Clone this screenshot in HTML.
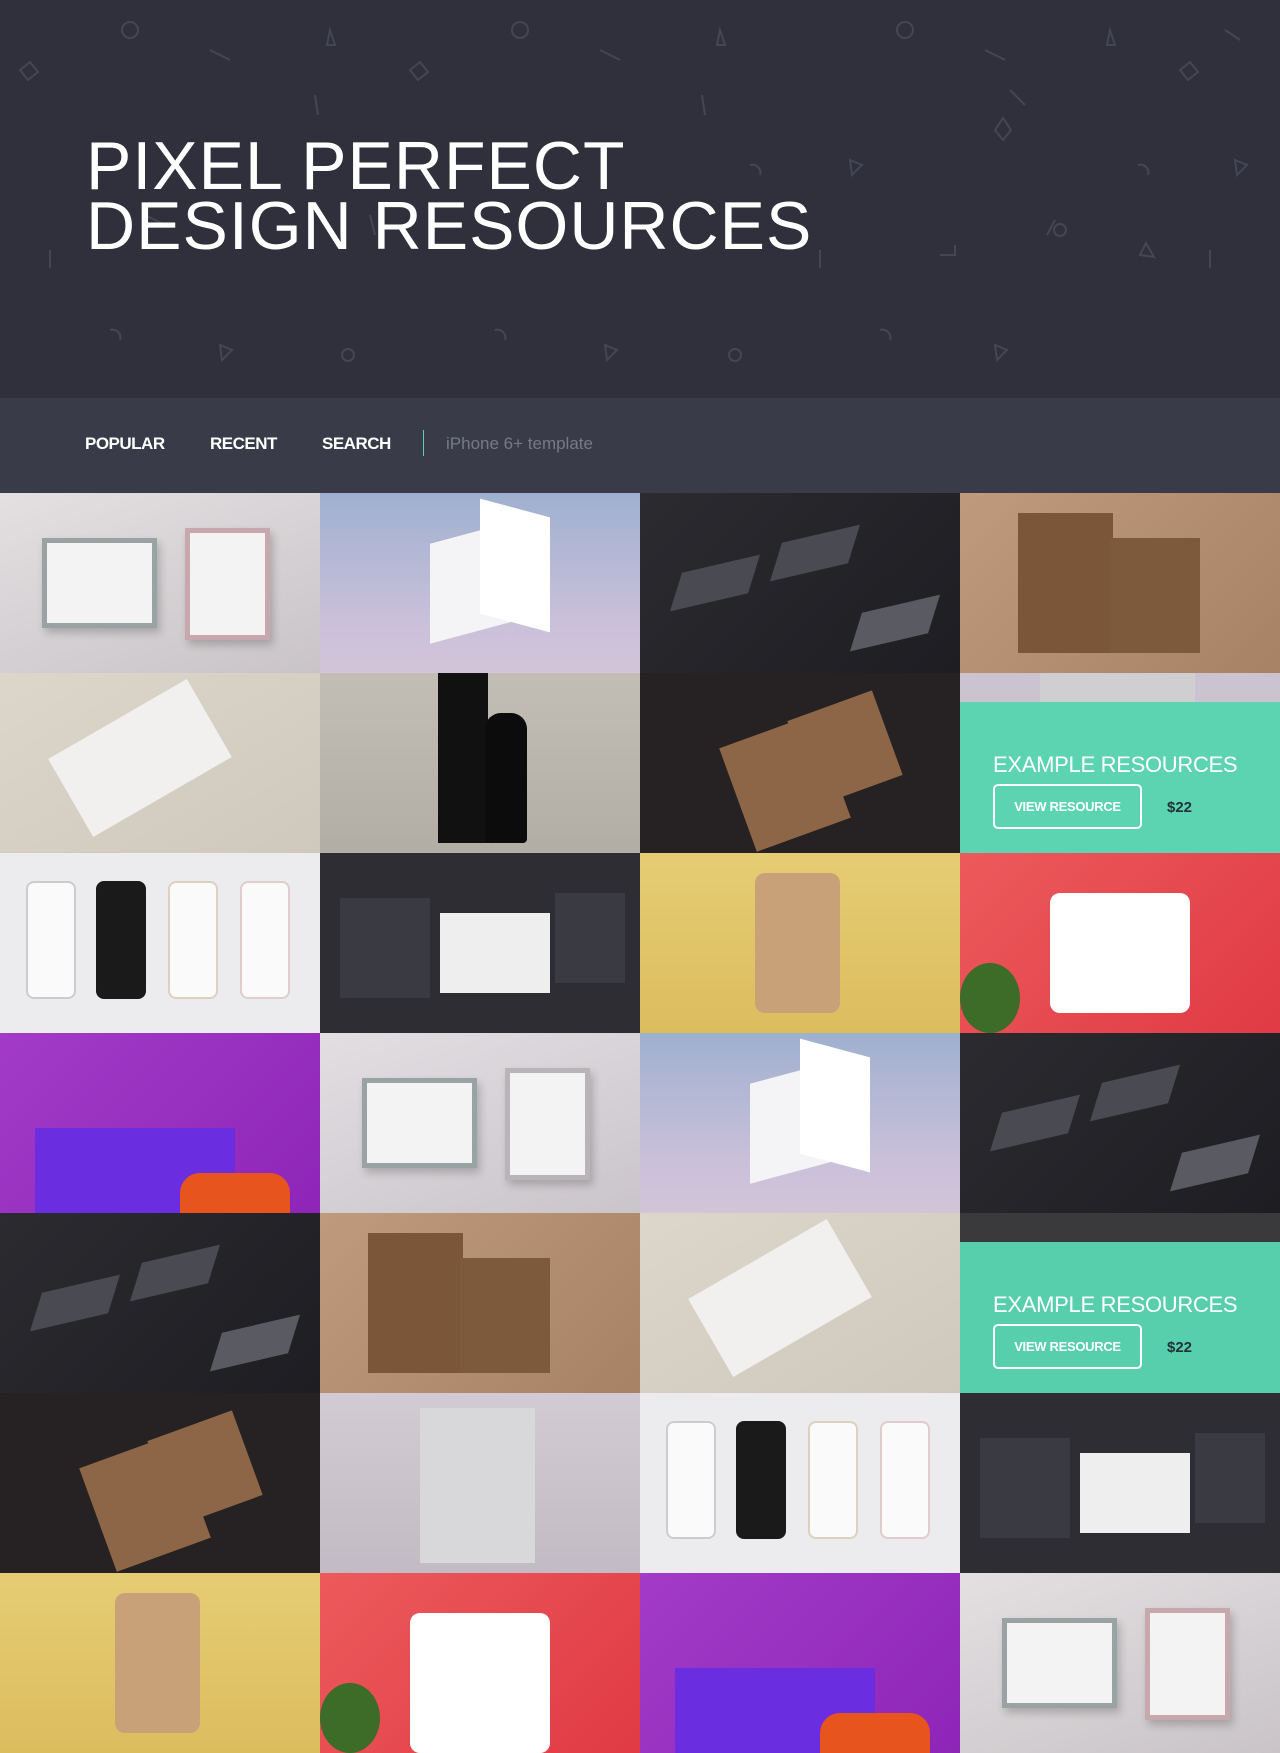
<!DOCTYPE html>
<html><head><meta charset="utf-8"><style>
*{margin:0;padding:0;box-sizing:border-box}
body{width:1280px;height:1753px;overflow:hidden;background:#30303c;font-family:"Liberation Sans",sans-serif}
.hdr{position:absolute;left:0;top:0;width:1280px;height:398px;background:#30303c;overflow:hidden}
.hdr h1{position:absolute;left:86px;top:136px;color:#fff;font-weight:400;font-size:68px;line-height:60px;letter-spacing:1px}
.nav{position:absolute;left:0;top:398px;width:1280px;height:95px;background:#393b49}
.nav span{position:absolute;top:36px;color:#fff;font-weight:700;font-size:17px;letter-spacing:-0.5px}
.nav .sep{position:absolute;left:423px;top:32px;width:1px;height:26px;background:#5ad0b0}
.nav .q{font-weight:400;color:#777a85;letter-spacing:0}
.grid{position:absolute;left:0;top:493px;width:1280px}
.t{position:absolute;width:320px;height:180px;overflow:hidden}
.ov{position:absolute;left:0;top:29px;width:320px;height:151px;background:rgba(88,212,176,.97)}
.ov b{position:absolute;left:33px;top:50px;color:#fff;font-weight:400;font-size:22px;letter-spacing:-.3px}
.ov i{position:absolute;left:33px;top:82px;width:149px;height:45px;border:2px solid #fff;border-radius:5px;color:#fff;font-style:normal;font-weight:700;font-size:13px;line-height:41px;text-align:center;letter-spacing:-.3px}
.ov u{position:absolute;left:207px;top:97px;text-decoration:none;font-weight:700;font-size:15px;color:#23323a}
.fr{position:absolute;border:5px solid #9aa3a3;background:#f3f3f3;box-shadow:3px 5px 8px rgba(0,0,0,.2)}
.cd{position:absolute;width:70px;height:40px;background:#4a4a52;transform:skewX(-30deg) rotate(-15deg)}
</style></head><body>
<div class="hdr">
<svg width="1280" height="398" style="position:absolute;left:0;top:0" fill="none" stroke="#454655" stroke-width="2">
<circle cx="130" cy="30" r="8"/><circle cx="520" cy="30" r="8"/><circle cx="905" cy="30" r="8"/><circle cx="735" cy="355" r="6"/><circle cx="348" cy="355" r="6"/><circle cx="1060" cy="230" r="6"/>
<path d="M20 70l10-8 8 10-10 8z M410 70l10-8 8 10-10 8z M1180 70l10-8 8 10-10 8z M995 130l8-12 8 12-8 10z"/>
<path d="M330 30l5 15h-8z M720 30l5 15h-8z M1110 30l5 15h-8z M1140 255l6-12 8 14z M220 345l12 5-10 10z M605 345l12 5-10 10z M850 160l12 5-10 10z M1235 160l12 5-10 10z M995 345l12 5-10 10z"/>
<path d="M210 50l20 10 M600 50l20 10 M985 50l20 10 M145 215l20 10 M375 235l-5-20 M705 115l-3-20 M318 115l-3-20 M1055 220l-8 15 M50 250v18 M820 250v18 M1210 250v18 M1010 90l15 15 M1225 30l15 10"/>
<path d="M110 330a8 8 0 0 1 10 10 M495 330a8 8 0 0 1 10 10 M880 330a8 8 0 0 1 10 10 M750 165a8 8 0 0 1 10 10 M1138 165a8 8 0 0 1 10 10 M940 255h15v-10"/>
</svg>
<h1>PIXEL PERFECT<br>DESIGN RESOURCES</h1>
</div>
<div class="nav">
<span style="left:85px">POPULAR</span><span style="left:210px">RECENT</span><span style="left:322px">SEARCH</span>
<div class="sep"></div><span class="q" style="left:446px">iPhone 6+ template</span>
</div>
<div class="grid">
<div class="t" style="left:0;top:0;background:linear-gradient(160deg,#e4e0e2,#c9c4c7)"><div class="fr" style="left:42px;top:45px;width:115px;height:90px"></div><div class="fr" style="left:185px;top:35px;width:85px;height:112px;border-color:#c7a9ad"></div></div>
<div class="t" style="left:320px;top:0;background:linear-gradient(180deg,#9fb0cf,#c9c0da 70%,#d3c4d8)"><div style="position:absolute;left:110px;top:40px;width:80px;height:100px;background:#f4f4f6;transform:skewY(-15deg)"></div><div style="position:absolute;left:160px;top:15px;width:70px;height:115px;background:#fff;transform:skewY(15deg)"></div></div>
<div class="t" style="left:640px;top:0;background:linear-gradient(135deg,#2b2b30,#1d1d22)"><div class="cd" style="left:40px;top:70px"></div><div class="cd" style="left:140px;top:40px"></div><div class="cd" style="left:220px;top:110px;background:#5a5a62"></div></div>
<div class="t" style="left:960px;top:0;background:linear-gradient(135deg,#c09a7c,#a88264)"><div style="position:absolute;left:58px;top:20px;width:95px;height:140px;background:#7b5638"></div><div style="position:absolute;left:150px;top:45px;width:90px;height:115px;background:#7e5a3c"></div></div>
<div class="t" style="left:0;top:180px;background:linear-gradient(150deg,#ddd6ca,#cfc8bc)"><div style="position:absolute;left:60px;top:40px;width:160px;height:90px;background:#f2f0ee;transform:rotate(-30deg)"></div></div>
<div class="t" style="left:320px;top:180px;background:linear-gradient(180deg,#c2beb6,#b2aea6)"><div style="position:absolute;left:118px;top:0;width:50px;height:170px;background:#111"></div><div style="position:absolute;left:165px;top:40px;width:42px;height:130px;background:#0c0c0c;border-radius:16px 16px 4px 4px"></div></div>
<div class="t" style="left:640px;top:180px;background:#262223"><div style="position:absolute;left:95px;top:55px;width:100px;height:110px;background:#8d6647;transform:rotate(-20deg)"></div><div style="position:absolute;left:160px;top:30px;width:90px;height:90px;background:#8d6647;transform:rotate(-20deg)"></div></div>
<div class="t" style="left:960px;top:180px;background:#cbc3cf"><div style="position:absolute;left:80px;top:0;width:155px;height:180px;background:#cfcfd2"></div><div class="ov"><b>EXAMPLE RESOURCES</b><i>VIEW RESOURCE</i><u>$22</u></div></div>
<div class="t" style="left:0;top:360px;background:#ececee"><div style="position:absolute;left:26px;top:28px;width:50px;height:118px;background:#fafafa;border:2px solid #ccc;border-radius:8px"></div><div style="position:absolute;left:96px;top:28px;width:50px;height:118px;background:#1a1a1a;border-radius:8px"></div><div style="position:absolute;left:168px;top:28px;width:50px;height:118px;background:#fafafa;border:2px solid #ddd0c0;border-radius:8px"></div><div style="position:absolute;left:240px;top:28px;width:50px;height:118px;background:#fafafa;border:2px solid #e0cccc;border-radius:8px"></div></div>
<div class="t" style="left:320px;top:360px;background:#2d2d33"><div style="position:absolute;left:20px;top:45px;width:90px;height:100px;background:#3a3a42"></div><div style="position:absolute;left:120px;top:60px;width:110px;height:80px;background:#eee"></div><div style="position:absolute;left:235px;top:40px;width:70px;height:90px;background:#3a3a42"></div></div>
<div class="t" style="left:640px;top:360px;background:linear-gradient(180deg,#e6cc74,#dcbd5e)"><div style="position:absolute;left:115px;top:20px;width:85px;height:140px;background:#c8a178;border-radius:10px"></div></div>
<div class="t" style="left:960px;top:360px;background:linear-gradient(135deg,#ec5a5c,#e03a45)"><div style="position:absolute;left:90px;top:40px;width:140px;height:120px;background:#fff;border-radius:10px"></div><div style="position:absolute;left:0;top:110px;width:60px;height:70px;background:#3d6b28;border-radius:50%"></div></div>
<div class="t" style="left:0;top:540px;background:linear-gradient(135deg,#a33bc8,#8e25b8)"><div style="position:absolute;left:35px;top:95px;width:200px;height:100px;background:#6a2ee0"></div><div style="position:absolute;left:180px;top:140px;width:110px;height:60px;background:#e8541e;border-radius:20px"></div></div>
<div class="t" style="left:320px;top:540px;background:linear-gradient(160deg,#e2dee2,#cac5ca)"><div class="fr" style="left:42px;top:45px;width:115px;height:90px"></div><div class="fr" style="left:185px;top:35px;width:85px;height:112px;border-color:#b8b4b8"></div></div>
<div class="t" style="left:640px;top:540px;background:linear-gradient(180deg,#9fb0cf,#c9c0da 70%,#d3c4d8)"><div style="position:absolute;left:110px;top:40px;width:80px;height:100px;background:#f4f4f6;transform:skewY(-15deg)"></div><div style="position:absolute;left:160px;top:15px;width:70px;height:115px;background:#fff;transform:skewY(15deg)"></div></div>
<div class="t" style="left:960px;top:540px;background:linear-gradient(135deg,#2b2b30,#1d1d22)"><div class="cd" style="left:40px;top:70px"></div><div class="cd" style="left:140px;top:40px"></div><div class="cd" style="left:220px;top:110px;background:#5a5a62"></div></div>
<div class="t" style="left:0;top:720px;background:linear-gradient(135deg,#2b2b30,#1d1d22)"><div class="cd" style="left:40px;top:70px"></div><div class="cd" style="left:140px;top:40px"></div><div class="cd" style="left:220px;top:110px;background:#5a5a62"></div></div>
<div class="t" style="left:320px;top:720px;background:linear-gradient(135deg,#c09a7c,#a88264)"><div style="position:absolute;left:48px;top:20px;width:95px;height:140px;background:#7b5638"></div><div style="position:absolute;left:140px;top:45px;width:90px;height:115px;background:#7e5a3c"></div></div>
<div class="t" style="left:640px;top:720px;background:linear-gradient(150deg,#ddd6ca,#cfc8bc)"><div style="position:absolute;left:60px;top:40px;width:160px;height:90px;background:#f2f0ee;transform:rotate(-30deg)"></div></div>
<div class="t" style="left:960px;top:720px;background:#3a3a3c"><div class="ov"><b>EXAMPLE RESOURCES</b><i>VIEW RESOURCE</i><u>$22</u></div></div>
<div class="t" style="left:0;top:900px;background:#262223"><div style="position:absolute;left:95px;top:55px;width:100px;height:110px;background:#8d6647;transform:rotate(-20deg)"></div><div style="position:absolute;left:160px;top:30px;width:90px;height:90px;background:#8d6647;transform:rotate(-20deg)"></div></div>
<div class="t" style="left:320px;top:900px;background:linear-gradient(180deg,#d3cbd3,#c3bbc4)"><div style="position:absolute;left:100px;top:15px;width:115px;height:155px;background:#d8d8da"></div></div>
<div class="t" style="left:640px;top:900px;background:#ececee"><div style="position:absolute;left:26px;top:28px;width:50px;height:118px;background:#fafafa;border:2px solid #ccc;border-radius:8px"></div><div style="position:absolute;left:96px;top:28px;width:50px;height:118px;background:#1a1a1a;border-radius:8px"></div><div style="position:absolute;left:168px;top:28px;width:50px;height:118px;background:#fafafa;border:2px solid #ddd0c0;border-radius:8px"></div><div style="position:absolute;left:240px;top:28px;width:50px;height:118px;background:#fafafa;border:2px solid #e0cccc;border-radius:8px"></div></div>
<div class="t" style="left:960px;top:900px;background:#2d2d33"><div style="position:absolute;left:20px;top:45px;width:90px;height:100px;background:#3a3a42"></div><div style="position:absolute;left:120px;top:60px;width:110px;height:80px;background:#eee"></div><div style="position:absolute;left:235px;top:40px;width:70px;height:90px;background:#3a3a42"></div></div>
<div class="t" style="left:0;top:1080px;background:linear-gradient(180deg,#e6cc74,#dcbd5e)"><div style="position:absolute;left:115px;top:20px;width:85px;height:140px;background:#c8a178;border-radius:10px"></div></div>
<div class="t" style="left:320px;top:1080px;background:linear-gradient(135deg,#ec5a5c,#e03a45)"><div style="position:absolute;left:90px;top:40px;width:140px;height:140px;background:#fff;border-radius:10px"></div><div style="position:absolute;left:0;top:110px;width:60px;height:70px;background:#3d6b28;border-radius:50%"></div></div>
<div class="t" style="left:640px;top:1080px;background:linear-gradient(135deg,#a33bc8,#8e25b8)"><div style="position:absolute;left:35px;top:95px;width:200px;height:100px;background:#6a2ee0"></div><div style="position:absolute;left:180px;top:140px;width:110px;height:60px;background:#e8541e;border-radius:20px"></div></div>
<div class="t" style="left:960px;top:1080px;background:linear-gradient(160deg,#e4e0e2,#c9c4c7)"><div class="fr" style="left:42px;top:45px;width:115px;height:90px"></div><div class="fr" style="left:185px;top:35px;width:85px;height:112px;border-color:#c7a9ad"></div></div>
</div>
</body></html>
